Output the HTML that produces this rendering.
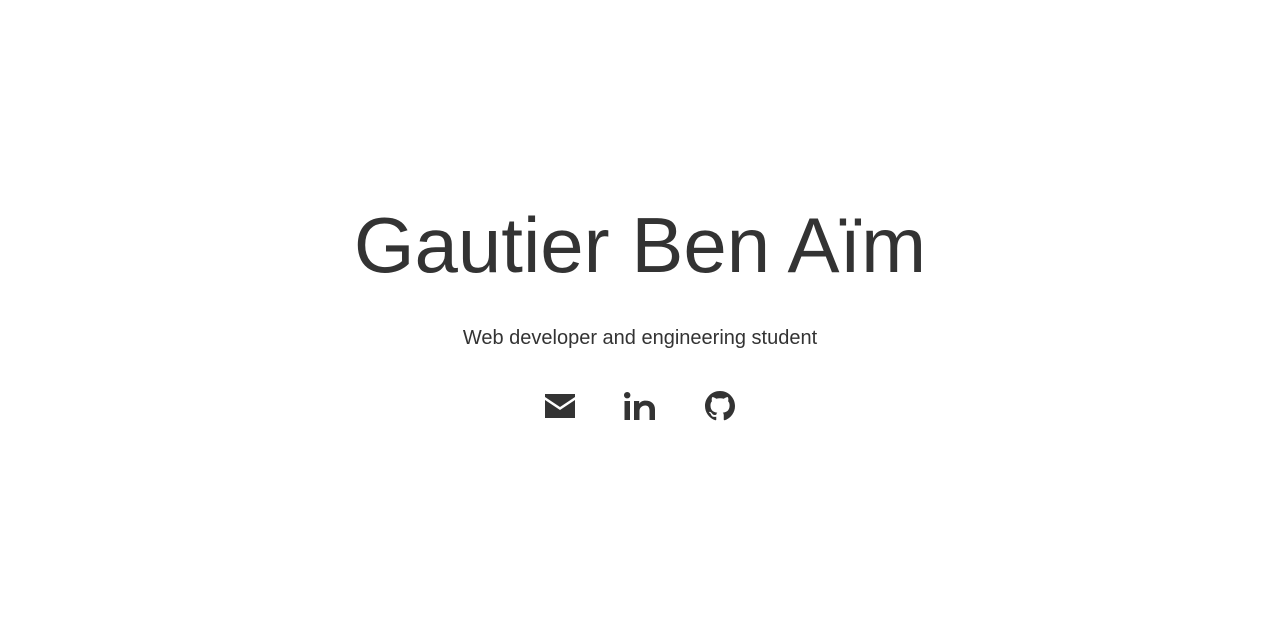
<!DOCTYPE html>
<html><head><meta charset="utf-8"><style>
html,body{margin:0;background:#fff;width:1280px;height:640px;overflow:hidden;font-family:"Liberation Sans",sans-serif;color:#333}
h1{position:absolute;left:0;width:1280px;top:195px;margin:0;text-align:center;font-weight:normal;font-size:78px;line-height:100px}
p{position:absolute;left:0;width:1280px;top:326px;margin:0;text-align:center;font-size:20px;line-height:24px}
svg{position:absolute}
</style></head><body>
<h1>Gautier Ben Aïm</h1>
<p>Web developer and engineering student</p>
<svg style="left:545px;top:394px" width="30" height="24" viewBox="0 0 30 24"><path d="M0 0H30V3L15 13L0 3Z M0 6L15 16L30 6V24H0Z" fill="#333"/></svg>
<svg style="left:624px;top:392px" width="31" height="28" viewBox="0 0 31 28"><circle cx="3.2" cy="3.2" r="3.2" fill="#333"/><rect x="0.5" y="9" width="5.5" height="19" fill="#333"/><path d="M10 9H15.2V11.8C16.3 9.9 18.3 8.6 21.5 8.6C27 8.6 31 11.5 31 17.5V28H25.5V18.5C25.5 15.5 24.2 13.5 21.3 13.5C18.3 13.5 15.5 15.5 15.5 19V28H10Z" fill="#333"/></svg>
<svg style="left:705px;top:391px" width="30" height="30" viewBox="0 0 16 16"><path fill="#333" d="M8 0C3.58 0 0 3.580 0 8c0 3.54 2.29 6.53 5.470 7.59.4.07.55-.17.55-.38 0-.19-.01-.82-.01-1.49-2.01.37-2.530-.49-2.690-.94-.09-.23-.48-.94-.82-1.130-.28-.15-.68-.52-.01-.53.63-.01 1.080.58 1.230.82.72 1.21 1.870.87 2.330.66.07-.52.28-.87.51-1.070-1.78-.2-3.640-.89-3.640-3.950 0-.87.31-1.59.82-2.150-.08-.2-.36-1.020.08-2.120 0 0 .67-.21 2.200.82.64-.18 1.320-.27 2-.27.68 0 1.360.09 2 .27 1.530-1.040 2.200-.82 2.200-.82.44 1.100.16 1.920.08 2.120.51.56.82 1.270.82 2.150 0 3.070-1.870 3.750-3.650 3.950.29.25.54.73.54 1.480 0 1.070-.01 1.930-.01 2.200 0 .21.15.46.55.38A8.013 8.013 0 0016 8c0-4.420-3.580-8-8-8z"/></svg>
</body></html>
